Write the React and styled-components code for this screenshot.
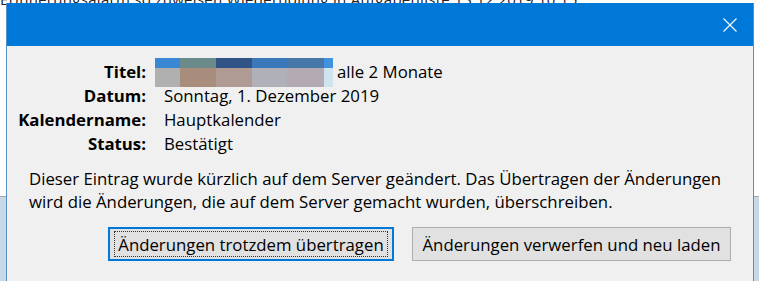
import React from "react";
import styled, { createGlobalStyle } from "styled-components";

const Global = createGlobalStyle`
  html, body {
    margin: 0;
    padding: 0;
    width: 759px;
    height: 281px;
    overflow: hidden;
  }
  body {
    font-family: "Open Sans", "Noto Sans", sans-serif;
  }
`;

const Desktop = styled.div`
  position: relative;
  width: 759px;
  height: 281px;
  overflow: hidden;
  background: linear-gradient(
    to bottom,
    #ffffff 0,
    #ffffff 196px,
    #a0a8b0 196px,
    #a0a8b0 197px,
    #c9d8e6 197px
  );
`;

const BackText = styled.div`
  position: absolute;
  left: 0;
  top: -11px;
  font-size: 15px;
  color: #222;
  white-space: nowrap;
  letter-spacing: 0.3px;
`;

const Window = styled.div`
  position: absolute;
  left: 6px;
  top: 3px;
  width: 746px;
  height: 290px;
  border: 1px solid #5a8fc4;
  border-top: none;
  background: #f0f0f0;
  display: flex;
  flex-direction: column;
`;

const TitleBar = styled.div`
  height: 43px;
  background: #0078d7;
  display: flex;
  align-items: center;
  justify-content: flex-end;
  padding-right: 16px;
`;

const CloseIcon = styled.svg`
  width: 14px;
  height: 14px;
  display: block;
`;

const Body = styled.div`
  padding: 13px 22px 0 0;
  display: flex;
  flex-direction: column;
`;

const InfoGrid = styled.div`
  display: grid;
  grid-template-columns: 139px auto;
  column-gap: 18px;
  grid-auto-rows: 24px;
  font-size: 16.8px;
  color: #000;
  align-items: center;
`;

const Label = styled.div`
  font-weight: 700;
  text-align: right;
  white-space: nowrap;
`;

const Value = styled.div`
  display: flex;
  align-items: center;
  gap: 4px;
  white-space: nowrap;
`;

const Redacted = styled.div`
  display: grid;
  grid-template-columns: 25px 36px 36px 35px 37px 9px;
  grid-template-rows: 10px 19px;
  margin-left: -9px;
  margin-top: 3px;
  align-self: flex-start;
  position: relative;
  z-index: 1;
`;

const Cell = styled.div`
  background: ${(p) => p.c};
`;

const Message = styled.p`
  margin: 12px 0 0 22px;
  font-size: 16.8px;
  line-height: 23px;
  color: #000;
  white-space: nowrap;
`;

const Buttons = styled.div`
  display: flex;
  justify-content: flex-end;
  gap: 18px;
  margin-top: 14px;
`;

const Button = styled.button`
  height: 34px;
  box-sizing: border-box;
  padding: 0 ${(p) => (p.primary ? "4px" : "8px")};
  font-family: inherit;
  font-size: 16.8px;
  color: #000;
  background: #e1e1e1;
  border: ${(p) => (p.primary ? "2px solid #0078d7" : "1px solid #adadad")};
  width: ${(p) => p.w}px;
  display: flex;
  align-items: center;
  justify-content: center;
  white-space: nowrap;
`;

const Focus = styled.span`
  border: 1px dotted #333;
  height: 26px;
  width: 100%;
  box-sizing: border-box;
  display: flex;
  align-items: center;
  justify-content: center;
`;

const topRow = ["#3a87d4", "#6b8a8a", "#2f5485", "#3a78ba", "#4577a8", "#4193e0"];
const bottomRow = ["#b0b0b0", "#a88c7c", "#b09a94", "#b0b0b8", "#b4aab4", "#d0e4f0"];

export default function App() {
  return (
    <Desktop>
      <Global />
      <BackText>
        Erinnerungsalarm so zuweisen     Wiederholung in Aufgabenliste     13.12.2019 10:15
      </BackText>
      <Window>
        <TitleBar>
          <CloseIcon viewBox="0 0 14 14">
            <path d="M0.5 0.5 L13.5 13.5 M13.5 0.5 L0.5 13.5" stroke="#fff" strokeWidth="1.1" />
          </CloseIcon>
        </TitleBar>
        <Body>
          <InfoGrid>
            <Label>Titel:</Label>
            <Value>
              <Redacted>
                {topRow.map((c, i) => (
                  <Cell key={"t" + i} c={c} />
                ))}
                {bottomRow.map((c, i) => (
                  <Cell key={"b" + i} c={c} />
                ))}
              </Redacted>
              alle 2 Monate
            </Value>
            <Label>Datum:</Label>
            <Value>Sonntag, 1. Dezember 2019</Value>
            <Label>Kalendername:</Label>
            <Value>Hauptkalender</Value>
            <Label>Status:</Label>
            <Value>Bestätigt</Value>
          </InfoGrid>
          <Message>
            Dieser Eintrag wurde kürzlich auf dem Server geändert. Das Übertragen der Änderungen
            <br />
            wird die Änderungen, die auf dem Server gemacht wurden, überschreiben.
          </Message>
          <Buttons>
            <Button primary w={286}>
              <Focus>Änderungen trotzdem übertragen</Focus>
            </Button>
            <Button w={319}>Änderungen verwerfen und neu laden</Button>
          </Buttons>
        </Body>
      </Window>
    </Desktop>
  );
}
